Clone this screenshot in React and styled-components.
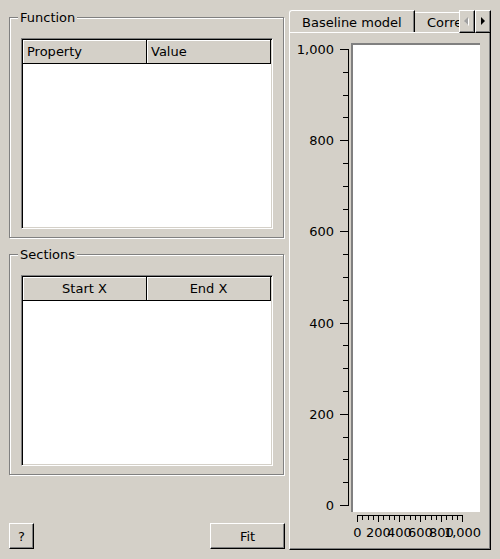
import React from 'react';
import styled, { createGlobalStyle } from 'styled-components';

const GlobalStyle = createGlobalStyle`
  html, body {
    margin: 0;
    padding: 0;
    background: #d4d0c8;
  }
  body {
    font-family: "DejaVu Sans", "Liberation Sans", sans-serif;
    font-size: 13px;
    color: #000;
  }
`;

const Window = styled.div`
  width: 500px;
  height: 559px;
  box-sizing: border-box;
  padding: 10px 9px 0 9px;
  display: flex;
  align-items: flex-start;
  gap: 4px;
  background: #d4d0c8;
`;

const LeftColumn = styled.div`
  width: 276px;
  height: 539px;
  box-sizing: border-box;
  padding-top: 7px;
  display: flex;
  flex-direction: column;
`;

const GroupBox = styled.div`
  position: relative;
  width: 275px;
  height: 221px;
  box-sizing: border-box;
  border: 1px solid #808080;
  box-shadow: inset 1px 1px 0 #fff, 1px 1px 0 #fff;
  padding: 20px 10px 8px 11px;
  display: flex;
  margin-bottom: ${(p) => p.$gap || 0}px;
`;

const GroupTitle = styled.span`
  position: absolute;
  top: -8px;
  left: 8px;
  padding: 0 2px;
  line-height: 15px;
  background: #d4d0c8;
`;

const Table = styled.div`
  flex: 1;
  box-sizing: border-box;
  border: 1px solid;
  border-color: #808080 #fff #fff #808080;
  box-shadow: inset 1px 1px 0 #000, inset -1px -1px 0 #d4d0c8;
  background: #fff;
  padding: 1px;
  display: flex;
  flex-direction: column;
`;

const HeaderRow = styled.div`
  display: flex;
  height: 24px;
`;

const HeaderCell = styled.div`
  flex: 1;
  box-sizing: border-box;
  background: #d4d0c8;
  border-right: 1px solid #000;
  border-bottom: 1px solid #000;
  box-shadow: inset 1px 1px 0 #fff;
  display: flex;
  align-items: center;
  justify-content: ${(p) => (p.$center ? 'center' : 'flex-start')};
  padding-left: ${(p) => (p.$center ? 0 : 4)}px;
  white-space: nowrap;
`;

const ButtonRow = styled.div`
  margin-top: auto;
  display: flex;
  justify-content: space-between;
`;

const PushButton = styled.button`
  width: ${(p) => p.$w}px;
  height: 26px;
  box-sizing: border-box;
  margin: 0;
  padding: 0;
  font: inherit;
  color: #000;
  background: #d4d0c8;
  border: 1px solid;
  border-color: #fff #000 #000 #fff;
  box-shadow: inset -1px -1px 0 #808080;
`;

const RightColumn = styled.div`
  width: 202px;
  height: 540px;
  display: flex;
  flex-direction: column;
`;

const TabBar = styled.div`
  display: flex;
  height: 22px;
`;

const TabStrip = styled.div`
  flex: 1;
  display: flex;
  align-items: flex-start;
  overflow: hidden;
`;

const Tab = styled.div`
  position: relative;
  z-index: 1;
  flex-shrink: 0;
  box-sizing: border-box;
  width: ${(p) => p.$w}px;
  height: ${(p) => (p.$active ? 23 : 20)}px;
  margin-top: ${(p) => (p.$active ? 0 : 2)}px;
  padding-left: 12px;
  display: flex;
  align-items: center;
  white-space: nowrap;
  background: #d4d0c8;
  border-top: 1px solid #fff;
  border-left: ${(p) => (p.$active ? '1px solid #fff' : 'none')};
  border-right: 1px solid #000;
  border-top-left-radius: ${(p) => (p.$active ? 3 : 0)}px;
  box-shadow: inset -1px 0 0 #808080;
`;

const ScrollButton = styled.div`
  width: 16px;
  height: 23px;
  box-sizing: border-box;
  position: relative;
  z-index: 2;
  background: #d4d0c8;
  border: 1px solid;
  border-color: #fff #000 #000 #fff;
  box-shadow: inset -1px -1px 0 #808080;
  display: flex;
  align-items: center;
  justify-content: center;
`;

const Pane = styled.div`
  flex: 1;
  box-sizing: border-box;
  border: 1px solid;
  border-color: #fff #000 #000 #fff;
  box-shadow: inset -1px -1px 0 #808080;
  background: #d4d0c8;
`;

const Arrow = ({ dir, disabled }) => (
  <svg width="6" height="9" viewBox="0 0 6 9">
    {dir === 'left' ? (
      <>
        {disabled && <polygon points="5,1 5,9 1,5" fill="#fff" />}
        <polygon points="4,0 4,8 0,4" fill={disabled ? '#a0a0a0' : '#000'} />
      </>
    ) : (
      <polygon points="1,0 1,8 5,4" fill="#000" />
    )}
  </svg>
);

const yPos = (v) => 472 - v * 0.456;
const xPos = (v) => 67 + v * 0.105;

function Chart() {
  const yTicks = [];
  for (let v = 0; v <= 1000; v += 50) {
    const major = v % 200 === 0;
    const y = Math.round(yPos(v)) + 0.5;
    yTicks.push(<line key={'y' + v} x1={major ? 50 : 53} x2={58} y1={y} y2={y} stroke="#000" />);
  }
  const xTicks = [];
  for (let v = 0; v <= 1000; v += 50) {
    const major = v % 200 === 0;
    const x = Math.round(xPos(v)) + 0.5;
    xTicks.push(<line key={'x' + v} x1={x} x2={x} y1={482} y2={major ? 489 : 487} stroke="#000" />);
  }
  const labels = [0, 200, 400, 600, 800, 1000];
  const fmt = (v) => v.toLocaleString('en-US');
  return (
    <svg width="198" height="514" style={{ display: 'block' }} fontFamily="DejaVu Sans, sans-serif" fontSize="13">
      <rect x="61" y="10" width="129" height="469" fill="#fff" />
      <rect x="61" y="10" width="2" height="469" fill="#808080" />
      <rect x="61" y="10" width="129" height="2" fill="#808080" />
      <line x1="58.5" x2="58.5" y1={Math.round(yPos(1000))} y2={Math.round(yPos(0)) + 1} stroke="#000" />
      {yTicks}
      {labels.map((v) => (
        <text key={'yl' + v} x="44" y={Math.round(yPos(v)) + 0.5} textAnchor="end" dominantBaseline="central">
          {fmt(v)}
        </text>
      ))}
      <line x1={xPos(0)} x2={xPos(1000) + 1} y1="482.5" y2="482.5" stroke="#000" />
      {xTicks}
      {labels.map((v) => (
        <text key={'xl' + v} x={Math.round(xPos(v)) + 0.5} y="504" textAnchor="middle">
          {fmt(v)}
        </text>
      ))}
    </svg>
  );
}

function DataTable({ columns, center }) {
  return (
    <Table>
      <HeaderRow>
        {columns.map((c) => (
          <HeaderCell key={c} $center={center}>{c}</HeaderCell>
        ))}
      </HeaderRow>
    </Table>
  );
}

export default function App() {
  return (
    <>
      <GlobalStyle />
      <Window>
        <LeftColumn>
          <GroupBox $gap={16}>
            <GroupTitle>Function</GroupTitle>
            <DataTable columns={['Property', 'Value']} />
          </GroupBox>
          <GroupBox>
            <GroupTitle>Sections</GroupTitle>
            <DataTable columns={['Start X', 'End X']} center />
          </GroupBox>
          <ButtonRow>
            <PushButton $w={25}>?</PushButton>
            <PushButton $w={75}>Fit</PushButton>
          </ButtonRow>
        </LeftColumn>
        <RightColumn>
          <TabBar>
            <TabStrip>
              <Tab $active $w={126}>Baseline model</Tab>
              <Tab $w={110}>Correction</Tab>
            </TabStrip>
            <ScrollButton>
              <Arrow dir="left" disabled />
            </ScrollButton>
            <ScrollButton>
              <Arrow dir="right" />
            </ScrollButton>
          </TabBar>
          <Pane>
            <Chart />
          </Pane>
        </RightColumn>
      </Window>
    </>
  );
}
